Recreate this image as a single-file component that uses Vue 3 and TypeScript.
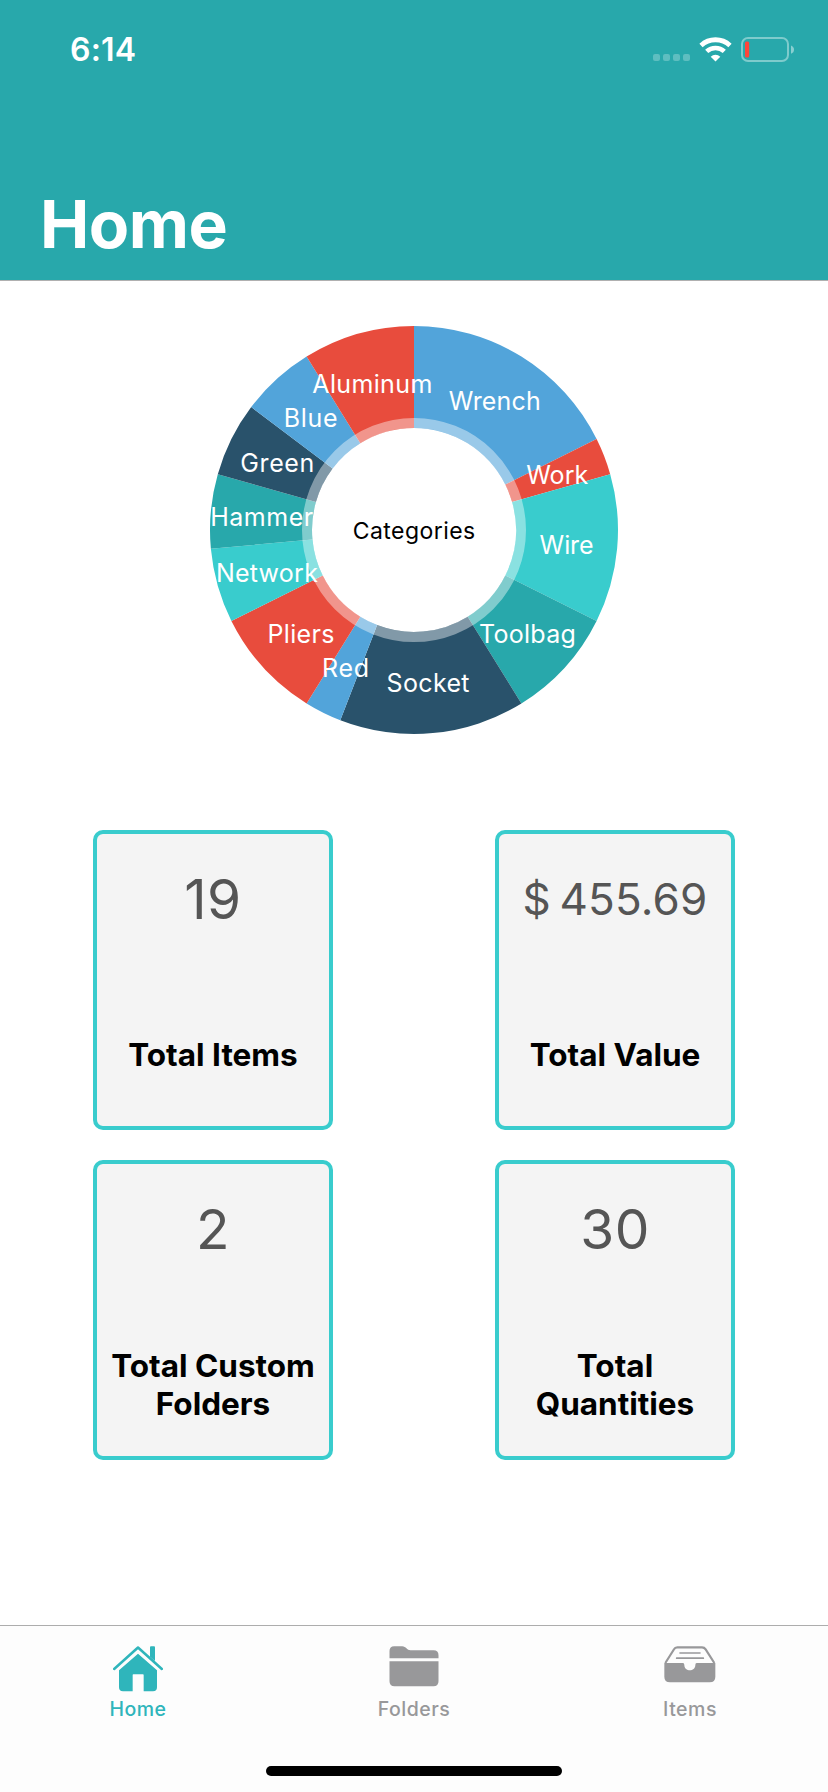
<script setup lang="ts">
interface Slice {
  name: string
  value: number
  color: string
  x: number
  y: number
  width: number
}

interface Stat {
  value: string
  label: string
  kind: string
}

const BLUE = '#52a4da'
const RED = '#e84c3d'
const AQUA = '#39cccd'
const TEAL = '#28a8ab'
const NAVY = '#29526b'

const slices: Slice[] = [
  { name: 'Wrench', value: 6, color: BLUE, x: 494.7, y: 409.7, width: 92 },
  { name: 'Work', value: 1, color: RED, x: 557.2, y: 483.7, width: 62 },
  { name: 'Wire', value: 4, color: AQUA, x: 566.6, y: 553.7, width: 54 },
  { name: 'Toolbag', value: 3, color: TEAL, x: 527.4, y: 642.7, width: 97 },
  { name: 'Socket', value: 5, color: NAVY, x: 428, y: 691.7, width: 83 },
  { name: 'Red', value: 1, color: BLUE, x: 345.6, y: 676.7, width: 47 },
  { name: 'Pliers', value: 3, color: RED, x: 301, y: 642.7, width: 67 },
  { name: 'Network', value: 2, color: AQUA, x: 266.9, y: 581.7, width: 102 },
  { name: 'Hammer', value: 2, color: TEAL, x: 261.7, y: 525.7, width: 103 },
  { name: 'Green', value: 2, color: NAVY, x: 277.3, y: 471.7, width: 74 },
  { name: 'Blue', value: 2, color: BLUE, x: 310.7, y: 426.7, width: 54 },
  { name: 'Aluminum', value: 3, color: RED, x: 372.3, y: 392.7, width: 120 },
]

const CX = 414
const CY = 530
const total = slices.reduce((sum, s) => sum + s.value, 0)

function point(units: number, r: number): string {
  const a = (units / total) * Math.PI * 2
  return `${(CX + r * Math.sin(a)).toFixed(2)} ${(CY - r * Math.cos(a)).toFixed(2)}`
}

let start = 0
const wedges = slices.map((s) => {
  const end = start + s.value
  const d = `M${point(start, 102)}L${point(start, 204)}A204 204 0 0 1 ${point(end, 204)}L${point(end, 102)}A102 102 0 0 0 ${point(start, 102)}Z`
  start = end
  return { color: s.color, d }
})

const stats: Stat[] = [
  { value: '19', label: 'Total Items', kind: 'count' },
  { value: '$ 455.69', label: 'Total Value', kind: 'money' },
  { value: '2', label: 'Total Custom Folders', kind: 'count' },
  { value: '30', label: 'Total Quantities', kind: 'count' },
]
</script>

<template>
  <div class="screen">
    <header class="header">
      <div class="status">
        <span class="time">6:14</span>
        <svg class="indicators" width="144" height="28" viewBox="0 0 144 28">
          <g fill="#fff" fill-opacity=".25">
            <rect x="1" y="18" width="7" height="7" rx="2" />
            <rect x="11" y="18" width="7" height="7" rx="2" />
            <rect x="21" y="18" width="7" height="7" rx="2" />
            <rect x="31" y="18" width="7" height="7" rx="2" />
          </g>
          <g fill="none" stroke="#fff">
            <path d="M49 9.400a21.500 21.500 0 0 1 29 0" stroke-width="4.800" />
            <path d="M54.700 15.400a13 13 0 0 1 17.600 0" stroke-width="4.600" />
          </g>
          <path d="M63.500 25.500l-4.800-4.800a7 7 0 0 1 9.600 0z" fill="#fff" />
          <rect x="90" y="2" width="46" height="23" rx="6" fill="none" stroke="#fff" stroke-opacity=".4" stroke-width="2" />
          <path d="M139 9.500c4 1.300 4 7 0 8.300z" fill="#fff" fill-opacity=".45" />
          <rect x="93" y="5.500" width="4.200" height="16" rx="1.500" fill="#ff453a" />
        </svg>
      </div>
      <h1 class="title">Home</h1>
    </header>

    <main class="content">
      <svg class="chart" width="414" height="414" viewBox="207 323 414 414">
        <path v-for="(w, i) in wedges" :key="i" :d="w.d" :fill="w.color" />
        <circle cx="414" cy="530" r="107" fill="none" stroke="#fff" stroke-opacity=".41" stroke-width="10" />
        <text
          v-for="s in slices"
          :key="s.name"
          class="slice-label"
          :x="s.x"
          :y="s.y"
          :textLength="s.width"
        >{{ s.name }}</text>
        <text class="center-label" x="414" y="538.8" textLength="122.500">Categories</text>
      </svg>

      <section class="stats">
        <article v-for="s in stats" :key="s.label" class="card">
          <div class="value" :class="s.kind">{{ s.value }}</div>
          <div class="label">{{ s.label }}</div>
        </article>
      </section>
    </main>

    <nav class="tabs">
      <div class="tab-row">
        <a class="tab active">
          <svg width="50" height="46" viewBox="69 107 150 138">
            <path d="M72.500 176L144 111.500L215.500 176" fill="none" stroke="currentColor" stroke-width="7.500" stroke-linecap="round" stroke-linejoin="round" />
            <path d="M180 111q0-3 3-3h9q3 0 3 3v41l-15-13z" fill="currentColor" />
            <path d="M144 130L201 180V231q0 12-12 12H161V194q0-2-2-2H130q-2 0-2 2V243H99q-12 0-12-12V180Z" fill="currentColor" />
          </svg>
          <span>Home</span>
        </a>
        <a class="tab">
          <svg width="50" height="46" viewBox="895.500 107 150 138">
            <path d="M897 144V122q0-14 14-14h24c12 0 14 12 25 12h69q15 0 15 15v9zM897 153h147v60q0 15-15 15H912q-15 0-15-15z" fill="currentColor" />
          </svg>
          <span>Folders</span>
        </a>
        <a class="tab">
          <svg width="52" height="46" viewBox="131 107 156 138">
            <path d="M135 158L161 117Q164 111 171 111H245Q252 111 256 117L282 158" fill="none" stroke="currentColor" stroke-width="6.500" />
            <path d="M179 128H239M169 143.500H249" stroke="currentColor" stroke-width="5" stroke-linecap="round" />
            <path d="M132 158H188q4 0 4 6c0 21 33 21 33 0q0-6 4-6H285V199q0 17-17 17H149q-17 0-17-17z" fill="currentColor" />
          </svg>
          <span>Items</span>
        </a>
      </div>
      <div class="home-bar"></div>
    </nav>
  </div>
</template>

<style>
body {
  margin: 0;
  background: #fff;
}
</style>

<style scoped>
.screen {
  width: 828px;
  height: 1792px;
  display: flex;
  flex-direction: column;
  overflow: hidden;
  background: #fff;
  font-family: Inter, Roboto, sans-serif;
}
.header {
  box-sizing: border-box;
  height: 281px;
  flex: none;
  background: #28a8ab;
  border-bottom: 1px solid #b0b0b0;
  color: #fff;
}
.status {
  display: flex;
  justify-content: space-between;
  align-items: flex-start;
  height: 100px;
  padding: 0 32px 0 70px;
}
.time {
  margin-top: 30px;
  font-size: 32px;
  line-height: 40px;
  font-weight: 600;
  letter-spacing: 0.2px;
}
.indicators {
  margin-top: 36px;
}
.title {
  margin: 84px 0 0 40px;
  font-size: 66px;
  line-height: 80px;
  font-weight: 700;
  letter-spacing: -0.5px;
}
.content {
  flex: 1;
  display: flex;
  flex-direction: column;
  align-items: center;
}
.chart {
  flex: none;
  margin-top: 42px;
}
.slice-label {
  font-size: 25px;
  fill: #fff;
  text-anchor: middle;
}
.center-label {
  font-size: 23px;
  fill: #000;
  text-anchor: middle;
}
.stats {
  display: grid;
  grid-template-columns: 240px 240px;
  column-gap: 162px;
  row-gap: 30px;
  margin-top: 93px;
}
.card {
  box-sizing: border-box;
  height: 300px;
  display: flex;
  flex-direction: column;
  border: 4px solid #39cccd;
  border-radius: 10px;
  background: #f4f4f4;
  text-align: center;
}
.value {
  height: 131px;
  line-height: 131px;
  color: #555;
  white-space: nowrap;
}
.count {
  font-size: 55px;
  letter-spacing: 0.5px;
}
.money {
  font-size: 44px;
  letter-spacing: 0.2px;
  word-spacing: -4px;
}
.label {
  height: 161px;
  display: flex;
  align-items: center;
  justify-content: center;
  margin-top: auto;
  padding-bottom: 0;
  color: #000;
  font-size: 31.5px;
  line-height: 38px;
  font-weight: 700;
  letter-spacing: 0;
  margin: 19px 8px 0;
}
.tabs {
  box-sizing: border-box;
  height: 167px;
  flex: none;
  display: flex;
  flex-direction: column;
  align-items: center;
  border-top: 1px solid #adadad;
  background: #fdfdfd;
}
.tab-row {
  width: 100%;
  height: 140px;
  flex: none;
  display: grid;
  grid-template-columns: repeat(3, 1fr);
}
.tab {
  display: flex;
  flex-direction: column;
  align-items: center;
  padding-top: 20px;
  color: #98989a;
  font-size: 19.5px;
  line-height: 24px;
  font-weight: 500;
  letter-spacing: 0.5px;
}
.tab span {
  margin-top: 5px;
}
.active {
  color: #2fb5bb;
}
.home-bar {
  width: 296px;
  height: 10px;
  border-radius: 5px;
  background: #000;
}
</style>
